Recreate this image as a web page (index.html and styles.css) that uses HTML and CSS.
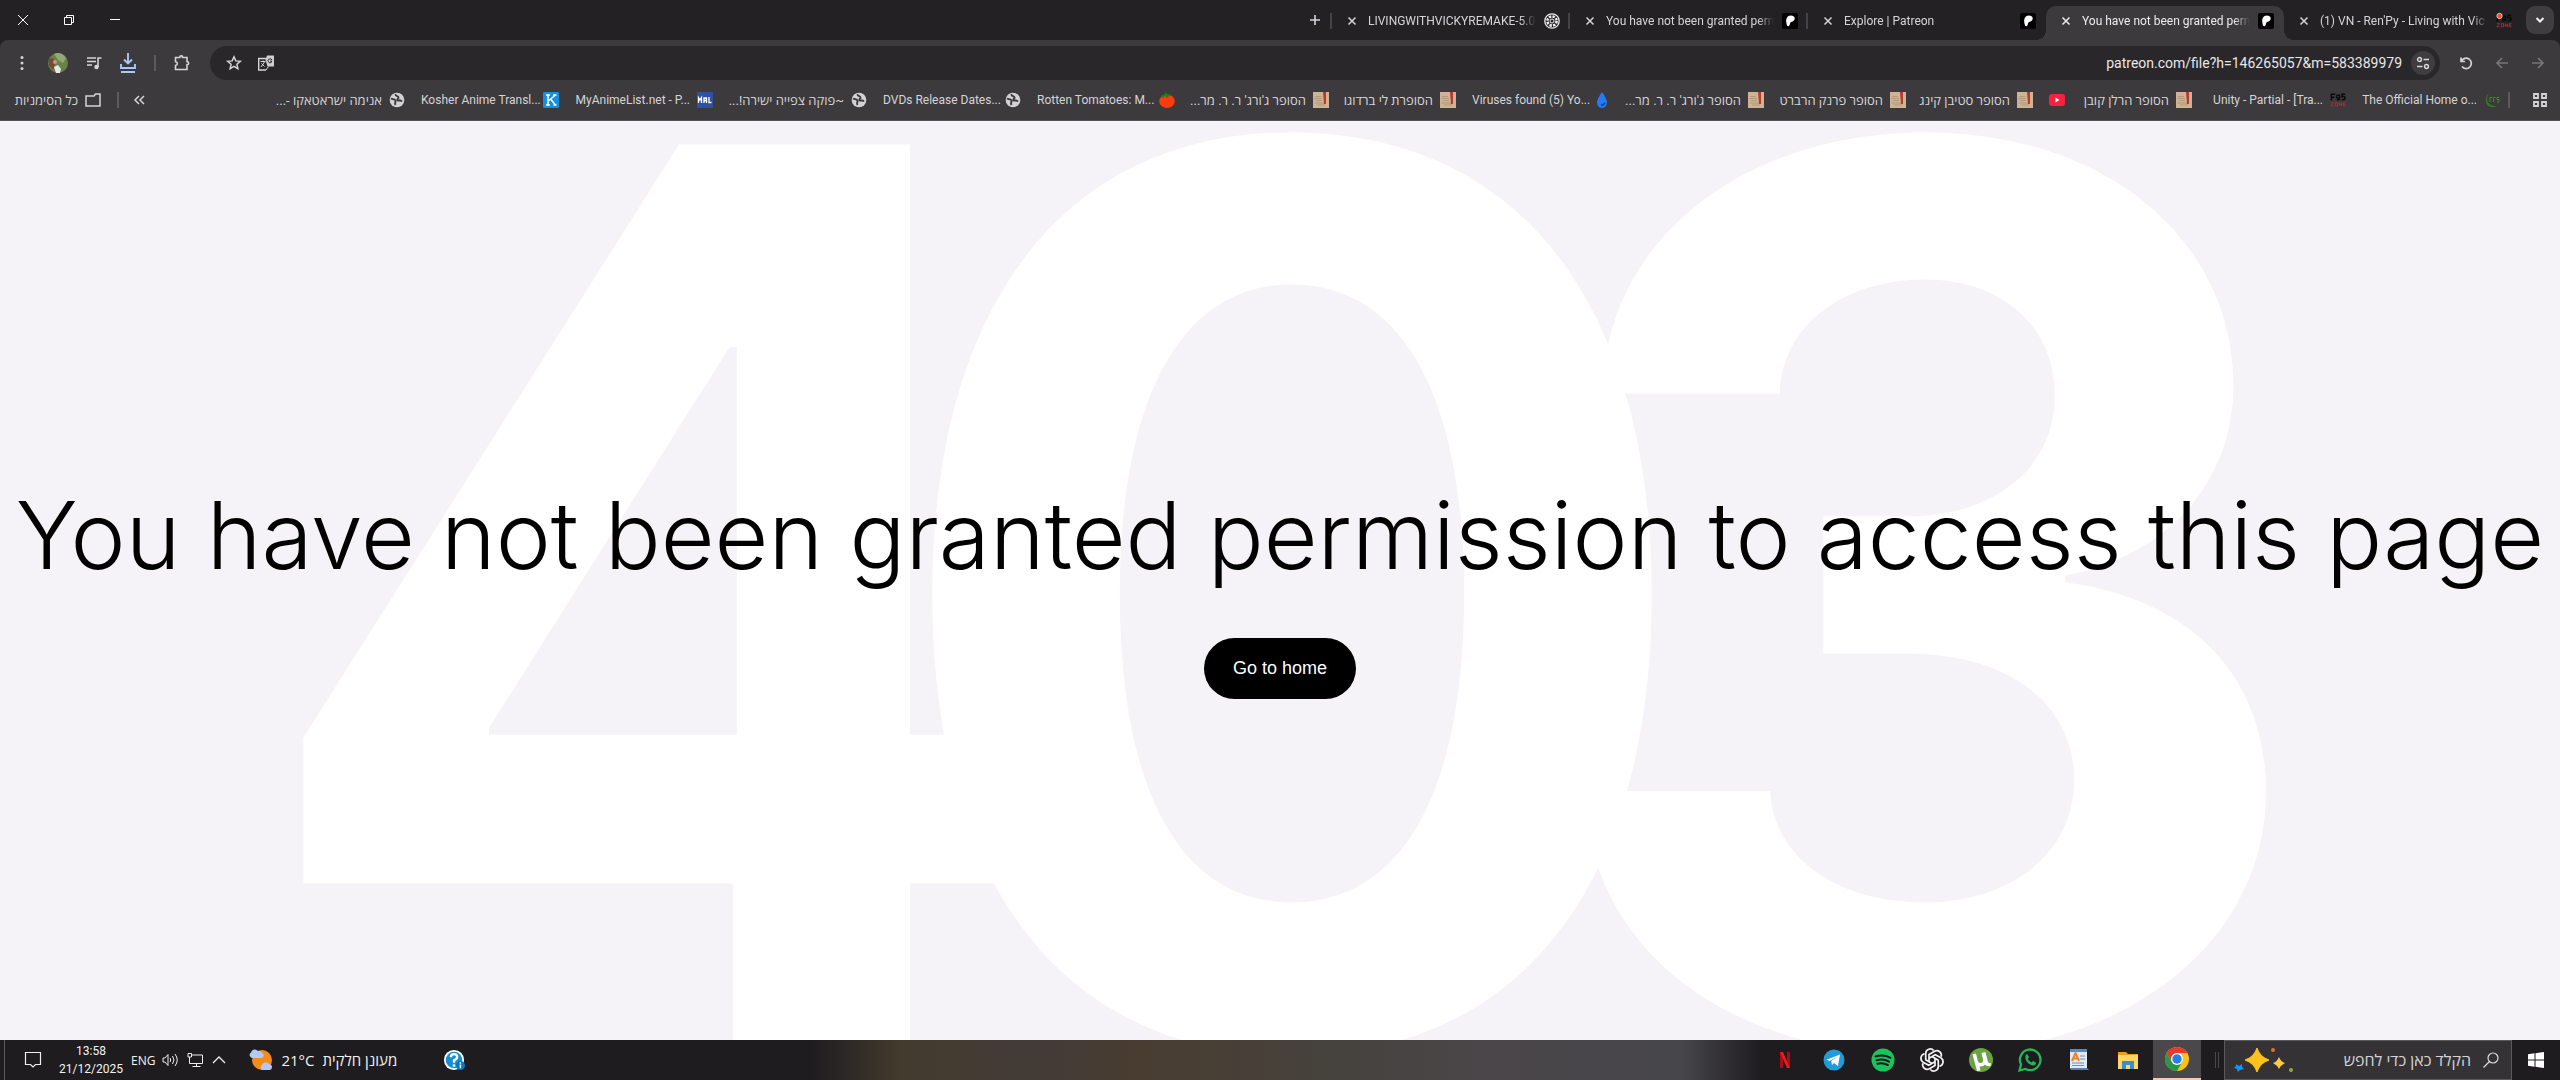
FILE: index.html
```html
<!DOCTYPE html>
<html lang="he" dir="rtl">
<head>
    <meta charset="UTF-8">
    <meta name="viewport" content="width=device-width, initial-scale=1.0">
    <title>You have not been granted permission to access this page</title>
    <link rel="stylesheet" href="styles.css">
</head>
<body>

    <!-- shared icons -->
    <svg class="sprite" aria-hidden="true">
        <symbol id="close" viewBox="0 0 16 16"><path d="M4.500 4.500l7 7M11.500 4.500l-7 7" stroke="currentColor" stroke-width="1.500" fill="none"/></symbol>
        <symbol id="patreon" viewBox="0 0 16 16"><rect width="16" height="16" rx="2" fill="#000"/><path d="M5 12.500C3.800 9 3.700 5.500 5.800 3.600 8 1.900 12.500 2.300 12.700 5.300c.1 3-2.800 3.300-4 4-.8.700-.8 4-2.300 4-.7 0-1.100-.3-1.400-.8z" fill="#fff"/></symbol>
        <symbol id="globe" viewBox="0 0 16 16"><circle cx="8" cy="8" r="7.300" fill="#d4d2d5"/><path d="M2 6.500c2 1 4 .5 4.500 2.200C7 10.300 5.200 10.500 6.500 13M6.500 2.200c-.2 2.500 2.500 1.500 3 3.200.5 1.500-2 1.500-1 2.800 1.200 1 3-.5 4.500 1.300" stroke="#3c3a3d" stroke-width="1.900" fill="none"/></symbol>
        <symbol id="book" viewBox="0 0 16 16"><rect width="16" height="16" fill="#cdb495"/><path d="M2 4.500h6M1 6.500h8M3 8.500h6M1.500 11h11M4 13h8" stroke="#ad8c6c" stroke-width=".7"/><path d="M10 0h3v12h-2z" fill="#b93a2b"/></symbol>
        <symbol id="f95" viewBox="0 0 18 16"><path d="M1.500 8.500V1.500H6M1.500 5H5M11 4.500a1.800 2.200 0 1 0-3.600 0c0 2 3.600 2 3.600 0 0 3-1 3.500-3.300 3.300M17 1.500h-3.500v2.800q3.500-.8 3.500 1.500 0 2.200-4 2" stroke="#0b0b0b" stroke-width="1.700" fill="none"/><path d="M1 11h3l-3 3.500h3M6 11h2.500v3.500H6zM10.500 14.500V11l2.500 3.500V11M17.500 11h-2.500v3.500h2.500M15 12.700h2" stroke="#c2252e" stroke-width="1" fill="none"/></symbol>
    </svg>

    <header class="browser">
        <div class="tab-strip">
            <button class="tab-search" aria-label="חיפוש כרטיסיות"><svg class="icon" viewBox="0 0 16 16"><path d="M4.500 6l3.500 3.500L11.500 6" stroke="#eee" stroke-width="2" fill="none"/></svg></button>
            <div class="tab">
                <svg class="icon" viewBox="0 0 16 16"><use href="#f95" width="16" height="16"/><circle cx="3.500" cy="3" r="2.700" fill="#ff4a2e" stroke="#eee" stroke-width=".7"/></svg>
                <span class="tab-title" dir="ltr">(1) VN - Ren'Py - Living with Vic</span>
                <button class="tab-close" aria-label="סגירה"><svg class="icon"><use href="#close"/></svg></button>
            </div>
            <div class="tab active">
                <svg class="icon"><use href="#patreon"/></svg>
                <span class="tab-title" dir="ltr">You have not been granted perm</span>
                <button class="tab-close" aria-label="סגירה"><svg class="icon"><use href="#close"/></svg></button>
            </div>
            <div class="tab">
                <svg class="icon"><use href="#patreon"/></svg>
                <span class="tab-title" dir="ltr">Explore | Patreon</span>
                <button class="tab-close" aria-label="סגירה"><svg class="icon"><use href="#close"/></svg></button>
            </div>
            <div class="tab line">
                <svg class="icon"><use href="#patreon"/></svg>
                <span class="tab-title" dir="ltr">You have not been granted perm</span>
                <button class="tab-close" aria-label="סגירה"><svg class="icon"><use href="#close"/></svg></button>
            </div>
            <div class="tab line">
                <svg class="icon" viewBox="0 0 16 16"><circle cx="8" cy="8" r="7.200" fill="none" stroke="#eee" stroke-width="1.300"/><circle cx="8" cy="8" r="4.600" fill="none" stroke="#eee" stroke-width="2.600" stroke-dasharray="2.400 1.200"/><circle cx="8" cy="8" r="2" fill="none" stroke="#eee"/></svg>
                <span class="tab-title" dir="ltr">LIVINGWITHVICKYREMAKE-5.0-</span>
                <button class="tab-close" aria-label="סגירה"><svg class="icon"><use href="#close"/></svg></button>
            </div>
            <button class="new-tab line" aria-label="כרטיסייה חדשה"><svg class="icon" viewBox="0 0 16 16"><path d="M8 3v10M3 8h10" stroke="#d6d4d7" stroke-width="1.600"/></svg></button>
            <div class="window-buttons">
                <button aria-label="מזעור"><svg viewBox="0 0 12 12"><path d="M1 5.500h10" stroke="#fff"/></svg></button>
                <button aria-label="שחזור"><svg viewBox="0 0 12 12"><path d="M1.500 3.500h7v7h-7zM3.500 3.500v-2h7v7h-2" stroke="#fff" fill="none"/></svg></button>
                <button aria-label="סגירת החלון"><svg viewBox="0 0 12 12"><path d="M1 1l10 10M11 1L1 11" stroke="#fff"/></svg></button>
            </div>
        </div>

        <div class="toolbar">
            <button aria-label="קדימה"><svg class="icon dim" viewBox="0 0 16 16"><path d="M2 8h11M8 3l5 5-5 5" stroke="currentColor" stroke-width="1.600" fill="none"/></svg></button>
            <button aria-label="הקודם"><svg class="icon dim" viewBox="0 0 16 16"><path d="M14 8H3M8 3L3 8l5 5" stroke="currentColor" stroke-width="1.600" fill="none"/></svg></button>
            <button aria-label="טעינה מחדש"><svg class="icon" viewBox="0 0 16 16"><path d="M3 2.500v4h4M3.500 6A5.200 5.200 0 1 1 4 11.500" stroke="currentColor" stroke-width="1.700" fill="none"/></svg></button>
            <div class="address">
                <button class="site-info" aria-label="פרטי האתר"><svg class="icon" viewBox="0 0 16 16"><path d="M8.500 4.500H14M2 11.500h5.500" stroke="currentColor" stroke-width="1.700"/><circle cx="4.500" cy="4.500" r="1.900" fill="none" stroke="currentColor" stroke-width="1.500"/><circle cx="11.500" cy="11.500" r="1.900" fill="none" stroke="currentColor" stroke-width="1.500"/></svg></button>
                <input type="text" class="url" dir="ltr" aria-label="כתובת" value="patreon.com/file?h=146265057&amp;m=583389979">
                <button aria-label="תרגום"><svg class="icon" viewBox="0 0 16 16"><path d="M8 3.500H.7V15H8" fill="none" stroke="currentColor" stroke-width="1.400"/><path d="M2.500 6.500h5M5 5.500v1M6.500 7L3 12M3.500 8.500l3 3" stroke="currentColor" fill="none"/><path d="M9 .5h7v11H9.500L7.500 5z" fill="#d0ced1"/><path d="M14 5.200a2 2 0 1 0-.5 2V6H12" stroke="#29272a" fill="none"/><path d="M8 15l2.500-3.500" stroke="currentColor"/></svg></button>
                <button aria-label="הוספה לסימניות"><svg class="icon" viewBox="0 0 16 16"><path d="M8 1.800l1.800 4.100 4.500.4-3.400 3 1 4.400L8 11.400l-3.900 2.300 1-4.400-3.400-3 4.500-.4z" stroke="currentColor" stroke-width="1.500" fill="none"/></svg></button>
            </div>
            <div class="actions">
                <button aria-label="תוספים"><svg class="icon" viewBox="0 0 16 16"><path d="M1.500 2.500h4.300c0-2.200 2.900-2.200 2.900 0H13v4.300c2.200 0 2.200 2.900 0 2.900v4.800H1.500v-4c2.500-.3 2.500-3.500 0-3.800z" stroke="currentColor" stroke-width="1.600" fill="none"/></svg></button>
                <span class="divider"></span>
                <button aria-label="הורדות"><svg class="icon download" viewBox="0 0 16 20"><path d="M8 0v10M4 6.500L8 10.500l4-4M1 11v4h14v-4" stroke="currentColor" stroke-width="1.900" fill="none"/><path d="M1 19h14" stroke="currentColor" stroke-width="2"/></svg></button>
                <button aria-label="מדיה"><svg class="icon" viewBox="0 0 16 16"><path d="M1 3h9M1 6.500h9M1 10h5M12 12V3h3.500" stroke="currentColor" stroke-width="1.600" fill="none"/><circle cx="10.500" cy="12" r="2.200" fill="currentColor"/></svg></button>
                <button aria-label="פרופיל"><svg class="avatar" viewBox="0 0 20 20"><circle cx="10" cy="10" r="10" fill="#66834a"/><path d="M6 1q7-3 12 4l-3 5-5-3z" fill="#93a879"/><path d="M1 6l4-1 2 6-2 6Q-1 12 1 6z" fill="#744a3d"/><path d="M6 14l4-2 3 4-1 4H8z" fill="#e8e6e8"/><circle cx="7" cy="9" r="2" fill="#c59a72"/></svg></button>
                <button aria-label="תפריט"><svg class="icon" viewBox="0 0 16 16"><circle cx="8" cy="2.500" r="1.500" fill="currentColor"/><circle cx="8" cy="8" r="1.500" fill="currentColor"/><circle cx="8" cy="13.500" r="1.500" fill="currentColor"/></svg></button>
            </div>
        </div>

        <nav class="bookmarks">
            <button class="apps" aria-label="כרטיסיות"><svg class="icon" viewBox="0 0 16 16"><path d="M2 2h4v4H2zM10 2h4v4h-4zM2 10h4v4H2zM10 10h4v4h-4z" stroke="currentColor" stroke-width="1.800" fill="none"/></svg></button>
            <span class="divider"></span>
            <a class="bookmark" href="#"><svg class="icon" viewBox="0 0 16 16"><path d="M5 1Q0 6 2.500 11.500t10.500 3Q6.500 14 4 10.500T5 1z" fill="#327a22"/><path d="M6 10V5.500h2M9.500 10V5.500h2M15 5.500h-2v2h2V10h-2" stroke="#3d8c2b" fill="none"/></svg><span class="name long" dir="ltr">The Official Home o...</span></a>
            <a class="bookmark" href="#"><svg class="icon"><use href="#f95"/></svg><span class="name long" dir="ltr">Unity - Partial - [Tra...</span></a>
            <a class="bookmark" href="#"><svg class="icon"><use href="#book"/></svg><span class="name short">הסופר הרלן קובן</span></a>
            <a class="bookmark" href="#" aria-label="YouTube"><svg class="icon" viewBox="0 0 16 16"><rect y="2" width="16" height="12" rx="3" fill="#f8203f"/><path d="M6.500 5.500l4 2.500-4 2.500z" fill="#fff"/></svg></a>
            <a class="bookmark" href="#"><svg class="icon"><use href="#book"/></svg><span class="name short">הסופר סטיבן קינג</span></a>
            <a class="bookmark" href="#"><svg class="icon"><use href="#book"/></svg><span class="name medium">הסופר פרנק הרברט</span></a>
            <a class="bookmark" href="#"><svg class="icon"><use href="#book"/></svg><span class="name long">הסופר ג'ורג' ר. ר. מר...</span></a>
            <a class="bookmark" href="#"><svg class="icon" viewBox="0 0 16 16"><path d="M8 0q5 7 5 10.500a5 5.500 0 0 1-10 0Q3 7 8 0z" fill="#237cf5"/><path d="M7 13q3 .5 4-2.500" stroke="#123f87" stroke-width="1.500" fill="none"/></svg><span class="name long" dir="ltr">Viruses found (5) Yo...</span></a>
            <a class="bookmark" href="#"><svg class="icon"><use href="#book"/></svg><span class="name short">הסופרת לי ברדוגו</span></a>
            <a class="bookmark" href="#"><svg class="icon"><use href="#book"/></svg><span class="name long">הסופר ג'ורג' ר. ר. מר...</span></a>
            <a class="bookmark" href="#"><svg class="icon" viewBox="0 0 16 16"><ellipse cx="8" cy="9.300" rx="7.800" ry="6.700" fill="#fa3b0b"/><path d="M2 4l4-2 1-2 1 2 5 1-3 1-2 2-2-2-3 2z" fill="#14831e"/></svg><span class="name long" dir="ltr">Rotten Tomatoes: M...</span></a>
            <a class="bookmark" href="#"><svg class="icon"><use href="#globe"/></svg><span class="name long" dir="ltr">DVDs Release Dates...</span></a>
            <a class="bookmark" href="#"><svg class="icon"><use href="#globe"/></svg><span class="name long">~פוקה צפייה ישירה!...</span></a>
            <a class="bookmark" href="#"><svg class="icon" viewBox="0 0 16 16"><rect width="16" height="16" rx="1" fill="#2e51a2"/><path d="M1.500 11V5.500L3 8l1.500-2.500V11M7 11V6h2.500v5M7 8.500h2.500M12 5v5.500h2.500" stroke="#fff" stroke-width="1.300" fill="none"/></svg><span class="name long" dir="ltr">MyAnimeList.net - P...</span></a>
            <a class="bookmark" href="#"><svg class="icon" viewBox="0 0 16 16"><rect width="16" height="16" rx="1" fill="#168fdc"/><path d="M3 3h4M3 13h4M5 3v10M12.500 3L6 8.500M7.500 7l5 6M10 3h3.500M10.500 13h3" stroke="#fff" stroke-width="1.500"/></svg><span class="name long" dir="ltr">Kosher Anime Transl...</span></a>
            <a class="bookmark" href="#"><svg class="icon"><use href="#globe"/></svg><span class="name long">אנימה ישראטאקו -...</span></a>
            <button class="more" aria-label="עוד סימניות"><svg class="icon" viewBox="0 0 16 16"><path d="M8 4L4 8l4 4M13 4L9 8l4 4" stroke="currentColor" stroke-width="1.500" fill="none"/></svg></button>
            <span class="divider"></span>
            <a class="bookmark all" href="#"><svg class="icon" viewBox="0 0 16 16"><path d="M1 4h8l1.500-2H15v12H1z" stroke="currentColor" stroke-width="1.500" fill="none"/></svg><span class="name">כל הסימניות</span></a>
        </nav>
    </header>

    <main class="page" dir="ltr">
        <div class="code" aria-hidden="true"><span>4</span><span>0</span><span>3</span></div>
        <h1>You have not been granted permission to access this page</h1>
        <a class="home" href="#">Go to home</a>
    </main>

    <footer class="taskbar">
        <button class="start" aria-label="התחל"><svg viewBox="0 0 16 16"><path d="M0 2.200L6.500 1.300v6.200H0zM7.500 1.200L16 0v7.500H7.500zM0 8.500h6.500v6.200L0 13.800zM7.500 8.500H16V16l-8.500-1.200z" fill="#fff"/></svg></button>
        <div class="search">
            <svg class="search-icon" viewBox="0 0 16 16"><circle cx="10" cy="6" r="5" fill="none" stroke="#ddd" stroke-width="1.200"/><path d="M6.500 9.500L.5 15.500" stroke="#ddd" stroke-width="1.200"/></svg>
            <input type="text" aria-label="חיפוש" placeholder="הקלד כאן כדי לחפש">
            <svg class="sparkles" viewBox="0 0 62 26"><path d="M24 1q3 9 12 12-9 3-12 12-3-9-12-12 9-3 12-12z" fill="#ffc21c" stroke="#ffc21c" stroke-linejoin="round"/><path d="M46 10q2 5 6 6-4 2-6 6-2-4-6-6 4-1 6-6z" fill="#ffc843"/><path d="M3 17l3 2 3-2v3l2 2-4 1-2 2-1-3-3-1 2-2z" fill="#1595ee"/><circle cx="40" cy="3" r="2" fill="#ee6b2d"/><circle cx="58" cy="23" r="2" fill="#80b33d"/></svg>
        </div>
        <span class="grip"></span>
        <div class="apps-row">
            <button class="app running" aria-label="Chrome"><svg viewBox="0 0 24 24"><circle cx="12" cy="12" r="12" fill="#fbc116"/><path d="M1.600 6A12 12 0 0 1 22.400 6H12l-5.200 9z" fill="#e33b2e"/><path d="M1.600 6A12 12 0 0 0 12 24l5.200-9H6.800z" fill="#279847"/><circle cx="12" cy="12" r="6" fill="#fff"/><circle cx="12" cy="12" r="4.700" fill="#287de8"/></svg></button>
            <button class="app" aria-label="סייר הקבצים"><svg viewBox="0 0 24 24"><path d="M2 4h8l2 2h10v15H2z" fill="#e5a019"/><path d="M2 7h20v14H2z" fill="#ffd765"/><path d="M6 21v-8h12v8h-4v-4h-4v4z" fill="#368edb"/></svg></button>
            <button class="app" aria-label="WordPad"><svg viewBox="0 0 24 24"><path d="M3 1h17v20H3z" fill="#dfeaf5"/><path d="M3 1h17v3H3z" fill="#5f89b5"/><path d="M5 15h12M5 17.500h12M13 8h5M13 11h5" stroke="#7390b4"/><path d="M5 13L8.500 5 12 13M6 10.500h5" stroke="#ef8427" stroke-width="2" fill="none"/><path d="M3 20h17l2 2H4z" fill="#5d7faa"/></svg></button>
            <button class="app" aria-label="WhatsApp"><svg viewBox="0 0 24 24"><path d="M1.500 22.500l1.500-6A10.300 10.300 0 1 1 7.500 21z" fill="none" stroke="#20b858" stroke-width="2.300"/><path d="M8 6.500l1.500-.2 1.500 3-1.200 1.700q1.300 2.500 3.700 3.500l1.500-1.500 3 1.500q0 3-3 3C10.500 17 5.500 11.500 8 6.500z" fill="#20b858"/></svg></button>
            <button class="app" aria-label="uTorrent"><svg viewBox="0 0 24 24"><circle cx="12" cy="12" r="12" fill="#6ba341"/><path d="M7 5.500l1.700 7q.8 3 3.300 2.500t2-3.500l-1.600-6.500 4-1 2.600 10q.4 1.500 3 1l-.5 3q-4 1-5.500-1.500-1.500 2.500-5.500 2l1 4-3.500.5L3.500 6.300z" fill="#fff"/></svg></button>
            <button class="app" aria-label="ChatGPT"><svg viewBox="0 0 24 24"><g fill="none" stroke="#f2f2f2" stroke-width="1.700"><g id="petals"><path id="petal" d="M9 13.700V6.500L14.600 3.200a4.600 4.600 0 0 1 6.500 5.500"/><use href="#petal" transform="rotate(60 12 12)"/><use href="#petal" transform="rotate(120 12 12)"/></g><use href="#petals" transform="rotate(180 12 12)"/></g></svg></button>
            <button class="app" aria-label="Spotify"><svg viewBox="0 0 24 24"><circle cx="12" cy="12" r="11.500" fill="#1bc45c"/><path d="M4.500 8.500q8-2.500 15 1.300M5.500 12.300q6.500-2 12.500 1.300M6.300 15.800q5.500-1.500 10.500 1.200" stroke="#171719" stroke-width="2" stroke-linecap="round" fill="none"/></svg></button>
            <button class="app" aria-label="Telegram"><svg viewBox="0 0 24 24"><circle cx="12" cy="12" r="10.500" fill="#239bd9"/><path d="M4.500 11.800L18 6.500 16 18l-4-3-2 2-.8-4L16 8.500l-8.500 4.600z" fill="#fff"/></svg></button>
            <button class="app" aria-label="Netflix"><svg viewBox="0 0 24 24"><path d="M7 4h3v16H7zM14 4h3v16h-3z" fill="#a90c14"/><path d="M7 4h3l7 16h-3z" fill="#ed1a22"/></svg></button>
        </div>
        <div class="preview"></div>
        <button class="help" aria-label="עזרה"><svg viewBox="0 0 24 24"><circle cx="12" cy="12" r="11" fill="#fff"/><circle cx="12" cy="12" r="9" fill="#168fd2"/><path d="M8.500 9q0-3.300 3.500-3.300t3.500 3q0 2-3.500 3.600V15" stroke="#fff" stroke-width="2.500" fill="none"/><circle cx="12" cy="18" r="1.500" fill="#fff"/><circle cx="19" cy="18" r="5" fill="#0877bd"/><path d="M19 17v4M19 14.500V16" stroke="#fff" stroke-width="1.600"/></svg></button>
        <div class="weather">
            <span>מעונן חלקית</span>
            <span dir="ltr">21°C</span>
            <svg viewBox="0 0 24 24"><circle cx="13" cy="12" r="10" fill="#f58b1d"/><path d="M3 10a3 3 0 0 1-1-5.500 4 4 0 0 1 7-1.500q3-.5 4 2a2.700 2.700 0 0 1 0 5zM13 22a3 3 0 0 1 0-5 4 4 0 0 1 7-1q3 .5 3 3t-2 3z" fill="#b3c9f4"/></svg>
        </div>
        <div class="tray">
            <svg viewBox="0 0 16 16"><path d="M2 11l6-6 6 6" stroke="#eee" stroke-width="1.300" fill="none"/></svg>
            <svg viewBox="0 0 16 16"><path d="M4 3h11.500v8.500H4M1 1.500h3.500v3.500H1zM2.500 5v6.500H5M9.500 11.500v3M5.500 14.500h8" stroke="#eee" fill="none"/></svg>
            <svg viewBox="0 0 16 16"><path d="M0 6h2l3-3.500v11L2 10H0zM7 6q1.500 2 0 4M9.500 4q3 4 0 8M12 2q4.500 6 0 12" stroke="#eee" fill="none"/></svg>
            <span dir="ltr">ENG</span>
        </div>
        <time class="clock" dir="ltr"><span>13:58</span><span>21/12/2025</span></time>
        <button class="notify" aria-label="התראות"><svg viewBox="0 0 16 16"><path d="M.5.500h15v12h-5L8 15l-2.500-2.500h-5z" stroke="#eee" stroke-width="1.200" fill="none"/></svg></button>
        <span class="show-desktop"></span>
    </footer>

</body>
</html>
```
FILE: styles.css
```css
* {
    box-sizing: border-box;
}

body {
    margin: 0;
    height: 100vh;
    display: flex;
    flex-direction: column;
    overflow: hidden;
    font-family: "Open Sans", "Noto Sans", sans-serif;
    font-size: 12px;
    color: #d6d4d7;
    background: #f5f3f7;
}

button {
    display: flex;
    align-items: center;
    justify-content: center;
    flex: none;
    padding: 0;
    border: none;
    background: none;
    color: inherit;
    font: inherit;
    cursor: pointer;
}

a {
    color: inherit;
    text-decoration: none;
}

svg {
    flex: none;
    overflow: visible;
}

.sprite {
    display: none;
}

.icon {
    width: 16px;
    height: 16px;
}

.divider {
    width: 2px;
    height: 16px;
    flex: none;
    background: #5c5a5d;
}

/* tabs */
.browser {
    background: #232124;
    border-bottom: 1px solid #555356;
}

.tab-strip {
    display: flex;
    align-items: center;
    height: 40px;
    padding-right: 6px;
}

.tab-search {
    width: 28px;
    height: 28px;
    margin-left: 4px;
    border-radius: 9px;
    background: #3f3d40;
}

.tab {
    position: relative;
    display: flex;
    align-items: center;
    flex: none;
    width: 238px;
    height: 34px;
    padding: 0 10px 4px 12px;
    margin-top: 6px;
}

.tab.active {
    background: #3c3a3d;
    border-radius: 10px 10px 0 0;
    color: #eceaed;
}

.tab.active::before,
.tab.active::after {
    content: "";
    position: absolute;
    bottom: 0;
    width: 10px;
    height: 10px;
}

.tab.active::before {
    left: 100%;
    background: radial-gradient(circle at 100% 0, transparent 10px, #3c3a3d 10px);
}

.tab.active::after {
    right: 100%;
    background: radial-gradient(circle at 0 0, transparent 10px, #3c3a3d 10px);
}

.line::before {
    content: "";
    position: absolute;
    right: 0;
    top: 7px;
    width: 2px;
    height: 16px;
    background: #454346;
}

.tab-title {
    flex: 1;
    margin: 0 8px;
    overflow: hidden;
    white-space: nowrap;
    font-family: Roboto, sans-serif;
    -webkit-mask-image: linear-gradient(to left, transparent, #000 16px);
    mask-image: linear-gradient(to left, transparent, #000 16px);
}

.new-tab {
    position: relative;
    width: 34px;
    height: 28px;
}

.window-buttons {
    display: flex;
    margin-right: auto;
}

.window-buttons button {
    width: 46px;
    height: 40px;
}

.window-buttons svg {
    width: 12px;
    height: 12px;
}

/* toolbar */
.toolbar {
    display: flex;
    align-items: center;
    height: 46px;
    padding: 0 4px;
    border-radius: 8px 8px 0 0;
    background: #3c3a3d;
}

.toolbar > button {
    width: 36px;
    height: 32px;
}

.dim {
    color: #777578;
}

.address {
    display: flex;
    align-items: center;
    gap: 9px;
    flex: 1;
    height: 34px;
    margin-right: 8px;
    padding: 0 5px 0 16px;
    border-radius: 17px;
    background: #29272a;
}

.site-info {
    width: 24px;
    height: 24px;
    border-radius: 12px;
    background: #3f3d40;
}

.url {
    flex: 1;
    min-width: 0;
    padding: 0;
    border: none;
    outline: none;
    background: none;
    color: #e8e6e9;
    font-family: Roboto, sans-serif;
    font-size: 14px;
    text-align: right;
}

.url ~ button {
    margin-right: 7px;
}

.actions {
    display: flex;
    align-items: center;
    gap: 18px;
    padding: 0 20px 0 10px;
}

.avatar {
    width: 20px;
    height: 20px;
}

.download {
    height: 20px;
    color: #a8c7fa;
}

/* bookmarks */
.bookmarks {
    display: flex;
    align-items: center;
    height: 34px;
    padding: 0 12px 6px 6px;
    background: #3c3a3d;
}

.apps {
    margin-left: 22px;
}

.bookmark {
    display: flex;
    align-items: center;
    gap: 7px;
    padding: 0 8px;
}

.name {
    white-space: nowrap;
    font-family: Roboto, "Open Sans", sans-serif;
    text-align: right;
}

.name:not([dir]) {
    font-size: 13px;
}

.long {
    width: 115px;
}

.medium {
    width: 103px;
}

.short {
    width: 88px;
}

.more {
    margin-right: auto;
    margin-left: 12px;
}

.all {
    margin-right: 8px;
}

.all .name {
    min-width: 64px;
}

/* error page */
.page {
    position: relative;
    flex: 1;
    display: flex;
    flex-direction: column;
    align-items: center;
    justify-content: center;
    gap: 48px;
    padding-top: 18px;
    overflow: hidden;
    font-family: Inter, "Liberation Sans", sans-serif;
    color: #000;
}

.code {
    position: absolute;
    inset: 0;
    display: grid;
    grid-template-columns: repeat(3, 632px);
    align-content: center;
    justify-content: center;
    justify-items: center;
    padding: 28px 0 0 24px;
    font-size: 1235px;
    font-weight: 700;
    line-height: 1;
    color: #fff;
}

.page h1 {
    position: relative;
    margin: 0;
    font-size: 93px;
    font-weight: 300;
    line-height: 110px;
    white-space: nowrap;
}

.home {
    position: relative;
    padding: 20px 29px;
    border-radius: 31px;
    background: #000;
    color: #fff;
    font-family: "Liberation Sans", sans-serif;
    font-size: 18px;
    line-height: 21px;
}

/* taskbar */
.taskbar {
    display: flex;
    align-items: center;
    flex: none;
    height: 40px;
    background: #1e1c1f;
    color: #f2f2f2;
}

.start {
    width: 48px;
    height: 40px;
}

.start svg {
    width: 16px;
    height: 16px;
}

.search {
    display: flex;
    align-items: center;
    width: 288px;
    height: 40px;
    padding: 0 12px 0 8px;
    border: 1px solid #5b595c;
    background: #343235;
}

.search-icon {
    width: 16px;
    height: 16px;
}

.search input {
    flex: 1;
    min-width: 0;
    margin-right: 12px;
    padding: 0;
    border: none;
    outline: none;
    background: none;
    color: #ddd;
    font: inherit;
    font-size: 16px;
}

.search input::placeholder {
    color: #d5d3d6;
    opacity: 1;
}

.sparkles {
    width: 62px;
    height: 26px;
}

.grip {
    width: 4px;
    height: 16px;
    margin: 0 5px 0 14px;
    border: solid #4a484b;
    border-width: 0 1px;
}

.apps-row {
    display: flex;
    gap: 1px;
}

.app {
    width: 48px;
    height: 40px;
}

.app svg,
.weather svg {
    width: 24px;
    height: 24px;
}

.running {
    background: #4a484b;
    border-bottom: 2px solid #f9c5ac;
}

.preview {
    flex: 1;
    height: 40px;
    margin-left: 322px;
    background: linear-gradient(to left, transparent, #47464b 80px, #4a4649 280px, #46423d 430px, #493d31 620px, #433b37 720px, #443b2e 860px, #1e1c1f 950px);
}

.help {
    margin-left: 46px;
}

.help svg {
    width: 22px;
    height: 22px;
}

.weather {
    display: flex;
    align-items: center;
    gap: 8px;
    margin-left: 22px;
    font-size: 15px;
}

.tray {
    display: flex;
    align-items: center;
    gap: 8px;
    margin-left: 10px;
}

.tray svg {
    width: 16px;
    height: 16px;
}

.clock {
    display: flex;
    flex-direction: column;
    align-items: center;
    width: 60px;
    font-family: Roboto, sans-serif;
    line-height: 18px;
}

.notify {
    width: 56px;
    height: 40px;
}

.notify svg {
    width: 16px;
    height: 16px;
}

.show-desktop {
    width: 5px;
    height: 40px;
    border-right: 1px solid #5b595c;
}
```
